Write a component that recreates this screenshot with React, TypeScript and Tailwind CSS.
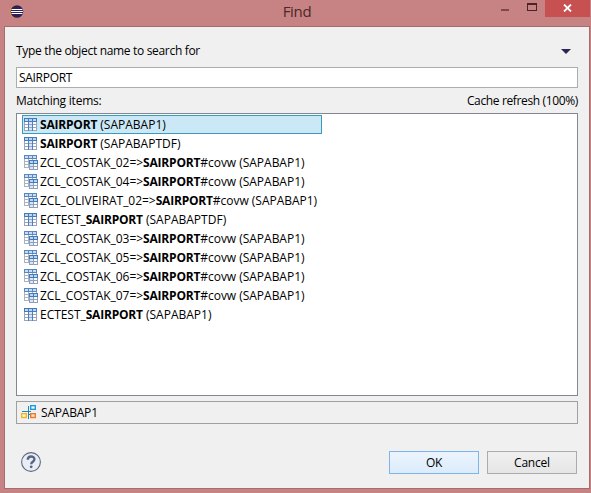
type Item = { before?: string; after: string; nested?: boolean };

const items: Item[] = [
  { after: " (SAPABAP1)" },
  { after: " (SAPABAPTDF)" },
  { before: "ZCL_COSTAK_02=>", after: "#covw (SAPABAP1)", nested: true },
  { before: "ZCL_COSTAK_04=>", after: "#covw (SAPABAP1)", nested: true },
  { before: "ZCL_OLIVEIRAT_02=>", after: "#covw (SAPABAP1)", nested: true },
  { before: "ECTEST_", after: " (SAPABAPTDF)" },
  { before: "ZCL_COSTAK_03=>", after: "#covw (SAPABAP1)", nested: true },
  { before: "ZCL_COSTAK_05=>", after: "#covw (SAPABAP1)", nested: true },
  { before: "ZCL_COSTAK_06=>", after: "#covw (SAPABAP1)", nested: true },
  { before: "ZCL_COSTAK_07=>", after: "#covw (SAPABAP1)", nested: true },
  { before: "ECTEST_", after: " (SAPABAP1)" },
];

function TableIcon() {
  return (
    <svg width="16" height="16" viewBox="0 0 16 16" shapeRendering="crispEdges" className="shrink-0">
      <rect x="1" y="1" width="13" height="13" fill="#98a5bd" />
      <rect x="1" y="1" width="13" height="4" fill="#4779b8" />
      <path d="M2 2h3v2H2zM6 2h3v2H6zM10 2h3v2h-3z" fill="#b7d8f5" />
      <path d="M2 5h3v2H2zM2 8h3v2H2zM2 11h3v2H2zM10 5h3v2h-3zM10 8h3v2h-3zM10 11h3v2h-3z" fill="#fff" />
      <path d="M6 5h3v2H6zM6 8h3v2H6zM6 11h3v2H6z" fill="#d5e7fa" />
      <path d="M5 4h1v10H5zM9 4h1v10H9z" fill="#4f7fbd" />
    </svg>
  );
}

function NestedTableIcon() {
  return (
    <svg width="16" height="16" viewBox="0 0 16 16" shapeRendering="crispEdges" className="shrink-0">
      <rect x="1" y="0" width="13" height="13" fill="#a9b2c3" />
      <rect x="1" y="0" width="13" height="4" fill="#5a86be" />
      <path d="M2 1h3v2H2zM6 1h3v2H6zM10 1h3v2h-3z" fill="#c3def6" />
      <path d="M2 4h3v2H2zM2 7h3v2H2zM2 10h3v2H2zM6 4h3v2H6zM10 4h3v2h-3z" fill="#fff" />
      <rect x="6" y="5" width="9" height="10" fill="#8f9fba" />
      <rect x="6" y="5" width="9" height="4" fill="#4779b8" />
      <path d="M7 6h3v2H7zM11 6h3v2h-3z" fill="#b7d8f5" />
      <path d="M7 9h3v2H7zM7 12h3v2H7z" fill="#d5e7fa" />
      <path d="M11 9h3v2h-3zM11 12h3v2h-3z" fill="#fff" />
    </svg>
  );
}

function EclipseIcon() {
  return (
    <svg width="15" height="15" viewBox="0 0 15 15">
      <circle cx="7" cy="7.5" r="6.3" fill="#f39a2d" />
      <circle cx="7.9" cy="7.5" r="6.3" fill="#2c2255" />
      <path d="M2.4 5.5h11M2 7.5h11.8M2.4 9.5h11" stroke="#fff" />
    </svg>
  );
}

function ProjectIcon() {
  return (
    <svg width="16" height="16" viewBox="0 0 16 16" fill="none">
      <path d="M1 6.5h9M7.5 1v13M7 9.5h3" stroke="#1b87bd" />
      <rect x="9.7" y="0.7" width="4.6" height="3.6" fill="#fff" stroke="#1e9bd6" strokeWidth="1.4" />
      <rect x="0.7" y="8.7" width="4.6" height="3.8" fill="#fff7d8" stroke="#f1b329" strokeWidth="1.4" />
      <rect x="9.7" y="8.7" width="4.6" height="3.8" fill="#ffe2c8" stroke="#ee7b2c" strokeWidth="1.4" />
    </svg>
  );
}

function TitleBar() {
  return (
    <header className="flex h-[26px] items-start">
      <div className="w-[200px] pl-[9px] pt-[4px]">
        <EclipseIcon />
      </div>
      <h1 className="w-[194px] text-center text-[15px] leading-[23px] tracking-[-0.3px] text-[#4a2828]">Find</h1>
      <div className="flex flex-1 justify-end">
        <svg width="52" height="17" viewBox="0 0 52 17" shapeRendering="crispEdges">
          <path d="M8 9h8v2H8z" fill="#7e4a4b" />
          <path d="M34 3h10v8H34zM35 5v5h8V5z" fill="#4a2527" fillRule="evenodd" />
        </svg>
        <button className="flex h-[17px] w-[45px] items-center justify-center bg-[#c75050]">
          <svg width="9" height="8" viewBox="0 0 9 8" className="-mt-px">
            <path d="M1 .5l7 7M8 .5l-7 7" stroke="#fff" strokeWidth="1.8" />
          </svg>
        </button>
      </div>
    </header>
  );
}

export default function App() {
  return (
    <div className="flex h-[493px] w-[591px] flex-col bg-[#c78283] pb-[4px] pl-[4px] pr-px font-['Open_Sans','Noto_Sans',sans-serif] text-[12px] text-black">
      <div className="-ml-[4px]">
        <TitleBar />
      </div>
      <main className="flex flex-1 flex-col border border-[#a66d6f] bg-[#f0f0f0] pl-[11px] pr-[11px]">
        <div className="mt-[15px] flex h-[18px] items-center justify-between">
          <span className="tracking-[-0.32px]">Type the object name to search for</span>
          <svg width="10" height="5" viewBox="0 0 10 5" className="mr-[7px]">
            <path d="M0 0h10L5 5z" fill="#2c2452" />
          </svg>
        </div>
        <div className="mt-[7px] flex h-[21px] items-center border border-[#abadb3] bg-white pl-[2px] tracking-[-0.3px]">SAIRPORT</div>
        <div className="mt-[4px] flex h-[18px] items-center justify-between">
          <span className="tracking-[-0.23px]">Matching items:</span>
          <span className="tracking-[-0.36px]">Cache refresh (100%)</span>
        </div>
        <ul className="mt-[3px] h-[283px] border border-[#828790] bg-white pl-[5px] pt-px">
          {items.map((item, i) => (
            <li
              key={i}
              className={`flex h-[19px] w-[300px] items-center whitespace-pre border leading-[17px] ${
                i === 0 ? "border-[#3a9cba] bg-[#cbe8f6]" : "border-transparent"
              }`}
            >
              {item.nested ? <NestedTableIcon /> : <TableIcon />}
              <span className="pl-px">
                <span className="tracking-[-0.04px]">{item.before}</span>
                <b className="font-bold tracking-[-0.2px]">SAIRPORT</b>
                <span className={item.nested ? "tracking-[-0.02px]" : "tracking-[0.01px]"}>{item.after}</span>
              </span>
            </li>
          ))}
        </ul>
        <div className="mt-[5px] flex h-[23px] items-center gap-[4px] border border-[#a0a0a0] pl-[4px] tracking-[-0.2px]">
          <ProjectIcon />
          SAPABAP1
        </div>
        <footer className="mt-[27px] flex h-[23px] items-center pl-[4px] pr-px">
          <svg width="22" height="22" viewBox="0 0 22 22" className="-mt-[2px]">
            <circle cx="11" cy="11" r="9.4" fill="#e9eef6" stroke="#5f6880" strokeWidth="1.1" />
            <path d="M7.8 8.8c0-4.4 6.6-4.2 6.6-.6 0 2.5-3.2 2.5-3.2 5" fill="none" stroke="#596581" strokeWidth="2.4" />
            <circle cx="11.2" cy="15.8" r="1.4" fill="#596581" />
          </svg>
          <div className="ml-auto flex gap-[8px]">
            <button className="h-[23px] w-[90px] border border-[#7eb4ea] bg-linear-to-b from-[#ebf4fc] to-[#dcecfc] leading-[21px] tracking-[-0.3px]">OK</button>
            <button className="h-[23px] w-[90px] border border-[#acacac] bg-linear-to-b from-[#f0f0f0] to-[#e5e5e5] leading-[21px] tracking-[-0.2px]">Cancel</button>
          </div>
        </footer>
      </main>
    </div>
  );
}
